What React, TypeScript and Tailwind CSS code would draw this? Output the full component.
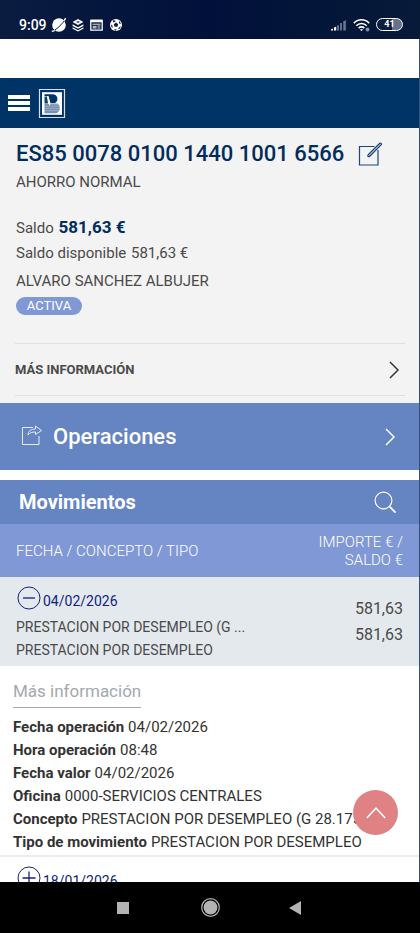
import React from "react";

type Movement = {
  date: string;
  concept: string;
  type: string;
  amount: string;
  balance: string;
  details?: { label: string; value: string }[];
};

const movements: Movement[] = [
  {
    date: "04/02/2026",
    concept: "PRESTACION POR DESEMPLEO (G ...",
    type: "PRESTACION POR DESEMPLEO",
    amount: "581,63",
    balance: "581,63",
    details: [
      { label: "Fecha operación", value: "04/02/2026" },
      { label: "Hora operación", value: "08:48" },
      { label: "Fecha valor", value: "04/02/2026" },
      { label: "Oficina", value: "0000-SERVICIOS CENTRALES" },
      { label: "Concepto", value: "PRESTACION POR DESEMPLEO (G 28.175" },
      { label: "Tipo de movimiento", value: "PRESTACION POR DESEMPLEO" },
    ],
  },
  { date: "18/01/2026", concept: "", type: "", amount: "", balance: "" },
];

function Chevron({ className }: { className: string }) {
  return (
    <svg className={className} width="10" height="18" viewBox="0 0 10 18" fill="none" stroke="currentColor" strokeWidth="1.5">
      <path d="M1 1l8 8-8 8" />
    </svg>
  );
}

function StatusBar() {
  return (
    <div className="flex h-[39px] shrink-0 items-center justify-between bg-linear-to-r from-[#0a1c40] via-[#01103a] to-[#071a38] pt-2.5 pr-[17px] pl-[19px] text-white">
      <div className="flex items-center gap-1">
        <span className="text-sm font-medium">9:09</span>
        <svg width="16" height="16" viewBox="0 0 16 16">
          <circle cx="8" cy="8" r="6.8" fill="#fff" />
          <path d="M1 14.6C4 13.8 12 7 14.8 1.2" stroke="#0a1c40" strokeWidth="1" fill="none" />
          <path d="M.8 14.4l3-.8M14.6 1.2l-1.4 2.4" stroke="#fff" strokeWidth="1.4" />
        </svg>
        <svg className="ml-px" width="12" height="14" viewBox="0 0 12 14" fill="#fff">
          <path d="M6 1l5.4 3L6 7 .6 4z" />
          <path d="M.6 6.2L6 9.2l5.4-3v1.7L6 10.8.6 7.9z" />
          <path d="M.6 9.3L6 12.2l5.4-2.9v1.4L6 13.6.6 10.7z" />
          <path d="M4.5 3.2l3 1.6M7.5 3.2l-3 1.6" stroke="#0a1c40" strokeWidth=".7" />
        </svg>
        <svg className="ml-0.5" width="13" height="12" viewBox="0 0 13 12" fill="none">
          <path d="M.8 1.5h11.4v9.7H.8z" stroke="#fff" strokeWidth="1.3" />
          <path d="M.8 2h11.4" stroke="#fff" strokeWidth="2.6" />
          <path d="M2.5 5.2h8M7.4 7h3M7.4 9h3" stroke="#fff" strokeWidth=".9" />
          <path d="M2.6 6.8h4v2.8h-4z" fill="#aab4c8" />
        </svg>
        <svg className="ml-0.5" width="14" height="14" viewBox="0 0 14 14">
          <circle cx="7" cy="7" r="6" fill="#fff" />
          <path d="M7 4.6l2.2 1.6-.8 2.6H5.6l-.8-2.6zM4 2.3l2.6.4-.5 1.1-2.1.7zM10.9 3.3l.9 2.8-1.3-.3-.8-1.7zM2 6.2l1.5 1.6.2 2.2-1.3-.9zM11.9 8.2l-1 2.4-1.8.9.8-2.1zM5.2 11.2h2.4l-.4 1.2H6z" fill="#0a1c40" />
        </svg>
      </div>
      <div className="flex items-center gap-1.5">
        <svg width="17" height="12" viewBox="0 0 17 12">
          <path d="M1 11.5h2v-2L1 10.5zM4 11.5h2.2v-4L4 8.6z" fill="#fff" />
          <path d="M8 11.5V6.2M11 11.5V4M14.2 11.5V2" stroke="#6d7893" strokeWidth="1.8" />
          <path d="M15.6 11.5V1" stroke="#6d7893" strokeWidth=".8" />
        </svg>
        <svg width="17" height="14" viewBox="0 0 17 14" fill="none" stroke="#fff" strokeWidth="1.6">
          <path d="M.8 5.2c4.2-4.6 11.2-4.6 15.4 0M3.3 7.8c2.9-3.1 7.5-3.1 10.4 0M5.7 10.1c1.6-1.6 4-1.6 5.6 0" />
          <path d="M8.5 13.2l-1.6-2h3.2z" fill="#fff" stroke="none" />
          <circle cx="14.5" cy="11.5" r="1.9" fill="#8791a8" stroke="none" />
        </svg>
        <div className="flex h-[13px] w-[27px] items-center justify-center rounded-full border border-white bg-linear-to-r from-[#0b1c3f] from-60% to-[#66728a] to-60% text-[9px] leading-[11px] font-bold">
          41
        </div>
      </div>
    </div>
  );
}

function BankHeader() {
  return (
    <header className="flex h-[50px] items-center gap-2 bg-[#003366] px-2">
      <button type="button" aria-label="Menú" className="flex w-[22px] flex-col gap-0.5">
        <span className="h-1 bg-white" />
        <span className="h-1 bg-white" />
        <span className="h-1 bg-white" />
      </button>
      <svg width="28" height="31" viewBox="0 0 28 31" role="img" aria-label="Banco">
        <path d="M1.5 1.5h25v28h-25z" fill="#003366" stroke="#d6dfeb" strokeWidth="1.2" />
        <path d="M4 4.2h20v22.6H4z" fill="#fff" />
        <path d="M6.5 6.2h8c5.5 0 6.5 6.5 2.5 8.8h-4.5L10.500 8H6.500z" fill="#003366" />
        <path d="M6.500 8.500H9l1 7H6.500z" fill="#123f70" />
        <path d="M6.500 16H11l1.200 2L12 15.500h7c3.800 1.500 4.200 9-1.500 9.700h-11z" fill="#7890b0" />
        <path d="M6 18.200h16M6 20.400h16M6 22.600h16M12 16.200h9" stroke="#b9c6d8" strokeWidth=".5" />
        <path d="M9.600 8l2 9" stroke="#fff" strokeWidth=".9" />
      </svg>
    </header>
  );
}

function AccountSummary() {
  return (
    <section className="bg-[#f3f3f3] px-4 pt-2.5 pb-[7px] text-[15px] leading-6 text-[#4a4a4a]">
      <div className="flex items-center justify-between pr-5">
        <h1 className="text-[22px] leading-8 font-medium whitespace-nowrap text-[#002d5f]">ES85 0078 0100 1440 1001 6566</h1>
        <button type="button" aria-label="Editar alias" className="shrink-0">
          <svg width="25" height="25" viewBox="0 0 25 25" fill="none" stroke="#1d477a" strokeWidth="1.2">
            <path d="M16.5 4.5H1.5v18.5h18.5V8" />
            <path d="M10.2 12.8L21.8 1.3c.8-.7 2.2.5 1.5 1.4L12 14c-1.4 1.4-3 .2-1.8-1.2z" fill="#c9d5e4" />
          </svg>
        </button>
      </div>
      <p>AHORRO NORMAL</p>
      <p className="mt-5 leading-[26px]">
        Saldo <strong className="ml-px text-[17px] font-bold text-[#002d5f]">581,63 €</strong>
      </p>
      <p>
        Saldo disponible <span className="ml-px">581,63 €</span>
      </p>
      <p className="mt-1">ALVARO SANCHEZ ALBUJER</p>
      <span className="mt-1 block h-[18px] w-[66px] rounded-full bg-[#8099d6] text-center text-[13px] leading-[18px] text-white">
        ACTIVA
      </span>
      <div className="mt-7 -mr-0.5 -ml-px">
        <button
          type="button"
          className="flex h-[53px] w-full items-center justify-between border-y border-[#e0e0e0] pr-1.5 text-[13px] font-bold"
        >
          MÁS INFORMACIÓN
          <Chevron className="text-[#333]" />
        </button>
      </div>
    </section>
  );
}

function ToggleIcon({ open }: { open: boolean }) {
  return (
    <svg width="24" height="24" viewBox="0 0 24 24" fill="none" stroke="#14227a" strokeWidth="1">
      <circle cx="12" cy="12" r="11" />
      <path d={open ? "M6 12h12" : "M5.5 12h13M12 5.5v13"} strokeWidth="1.3" />
    </svg>
  );
}

function MovementRow({ movement }: { movement: Movement }) {
  const open = Boolean(movement.details);
  return (
    <>
      <tr className={open ? "bg-[#e4e9ed]" : "border-t-2 border-[#ececec] bg-white"}>
        <td className="h-[89px] pt-[5px] pl-4 align-top text-sm leading-[23px]">
          <button type="button" aria-expanded={open} className="mb-[3px] flex items-center pl-px text-[#101f80]">
            <ToggleIcon open={open} />
            <span className="pt-2 pl-0.5">{movement.date}</span>
          </button>
          <div>{movement.concept}</div>
          <div>{movement.type}</div>
        </td>
        <td className="pt-[19px] pr-4 text-right align-top text-base leading-[26px]">
          <div>{movement.amount}</div>
          <div>{movement.balance}</div>
        </td>
      </tr>
      {movement.details && (
        <tr>
          <td colSpan={2} className="px-[13px] pt-2.5 pb-px text-[15px] text-[#333]">
            <h3 className="mb-2 inline-block border-b border-[#aaa] text-[17px] leading-[31px] text-[#a3a9ad]">Más información</h3>
            <dl className="leading-[23px] whitespace-nowrap">
              {movement.details.map((d) => (
                <div key={d.label} className="flex gap-1">
                  <dt className="font-bold">{d.label}</dt>
                  <dd>{d.value}</dd>
                </div>
              ))}
            </dl>
          </td>
        </tr>
      )}
    </>
  );
}

function Movements() {
  return (
    <section className="mt-2.5">
      <div className="flex h-11 items-center justify-between bg-[#6484c2] pr-[22px] pl-[19px] text-white">
        <h2 className="text-xl font-bold">Movimientos</h2>
        <button type="button" aria-label="Buscar">
          <svg width="23" height="23" viewBox="0 0 23 23" fill="none" stroke="#fff">
            <circle cx="9.5" cy="9.5" r="8.4" strokeWidth="1.2" />
            <path d="M15.6 15.6l6 6" strokeWidth="1.8" />
          </svg>
        </button>
      </div>
      <table className="w-full border-collapse text-[#4a4a4a]">
        <thead className="bg-[#8099d6] text-[15px] leading-[18px] text-white">
          <tr>
            <th scope="col" className="h-[53px] pl-4 text-left font-light">FECHA / CONCEPTO / TIPO</th>
            <th scope="col" className="w-28 pr-4 text-right font-light">IMPORTE € / SALDO €</th>
          </tr>
        </thead>
        <tbody>
          {movements.map((m) => (
            <MovementRow key={m.date} movement={m} />
          ))}
        </tbody>
      </table>
    </section>
  );
}

function SystemNav() {
  return (
    <nav className="flex h-[51px] shrink-0 items-center justify-center gap-[69px] bg-black">
      <button type="button" aria-label="Recientes" className="flex w-[18px] justify-center">
        <span className="size-3 bg-[#b3b3b3]" />
      </button>
      <button type="button" aria-label="Inicio">
        <svg width="19" height="19" viewBox="0 0 19 19">
          <circle cx="9.5" cy="9.5" r="8.8" fill="none" stroke="#b3b3b3" strokeWidth="1.2" />
          <circle cx="9.5" cy="9.5" r="6.9" fill="#b3b3b3" />
        </svg>
      </button>
      <button type="button" aria-label="Atrás" className="flex w-[18px] justify-start">
        <svg width="12" height="14" viewBox="0 0 12 14">
          <path d="M0 7L12 0v14z" fill="#b3b3b3" />
        </svg>
      </button>
    </nav>
  );
}

export default function App() {
  return (
    <div className="flex h-screen flex-col bg-white font-[Roboto,sans-serif]">
      <StatusBar />
      <div className="relative flex min-h-0 flex-1 flex-col border-r border-[#33507a]">
        <main className="min-h-0 flex-1 overflow-y-auto pt-[39px] [scrollbar-width:none]">
          <BankHeader />
          <AccountSummary />
          <button type="button" className="flex h-[67px] w-full items-center bg-[#6484c2] pr-6 pl-[22px] text-white">
            <svg className="mb-1" width="20" height="20" viewBox="0 0 20 20" fill="none" stroke="#e6edf9" strokeWidth="1">
              <path d="M8 2.5H.5v17h16.5V11M8 2.5h3" />
              <path d="M6 10c0-4 3-6 7.5-6V1l6 4.500-6 4V7C10 7 8 7.500 6 10z" />
            </svg>
            <span className="flex-1 pl-[11px] text-left text-[22px] font-medium">Operaciones</span>
            <Chevron className="text-white" />
          </button>
          <Movements />
        </main>
        <button
          type="button"
          aria-label="Volver arriba"
          className="absolute right-[21px] bottom-[47px] flex size-[45px] items-center justify-center rounded-full bg-[#e08283]"
        >
          <svg width="20" height="12" viewBox="0 0 20 12" fill="none" stroke="#fff" strokeWidth="1.5">
            <path d="M.8 11L10 1.2 19.2 11" />
          </svg>
        </button>
      </div>
      <SystemNav />
    </div>
  );
}
